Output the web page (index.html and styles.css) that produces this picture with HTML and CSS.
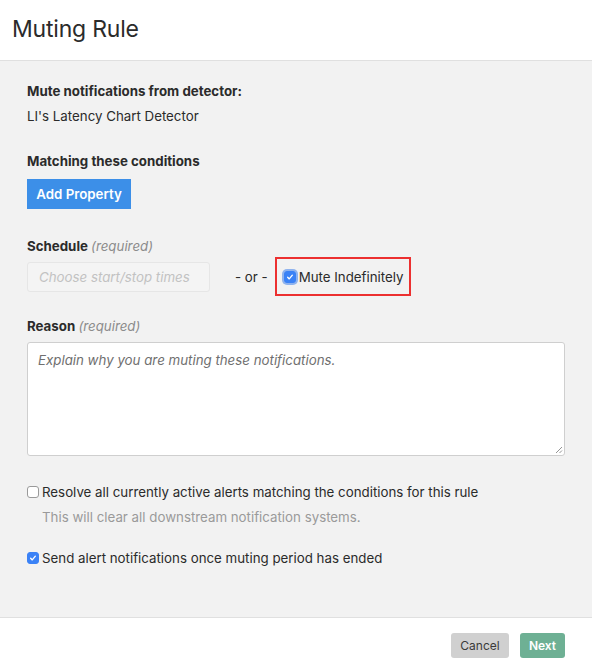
FILE: index.html
```html
<!DOCTYPE html>
<html>
<head>
<meta charset="utf-8">
<link rel="stylesheet" href="styles.css">
</head>
<body>
<div class="modal">
  <div class="header"><h1 class="title">Muting Rule</h1></div>
  <div class="body">
    <div class="label">Mute notifications from detector:</div>
    <div class="value">LI's Latency Chart Detector</div>

    <div class="label mt-section">Matching these conditions</div>
    <button class="btn-primary">Add Property</button>

    <div class="label mt-schedule">Schedule <span class="req">(required)</span></div>
    <div class="schedule-row">
      <div class="date-input">Choose start/stop times</div>
      <span class="or">- or -</span>
      <div class="highlight">
        <span class="cb checked focus"><svg viewBox="0 0 12 12" width="12" height="12"><path d="M3.2 6.3 L5.1 8.3 L8.8 3.8" fill="none" stroke="#fff" stroke-width="1.6" stroke-linecap="round" stroke-linejoin="round"/></svg></span>
        <span class="cb-text">Mute Indefinitely</span>
      </div>
    </div>

    <div class="label mt-reason">Reason <span class="req">(required)</span></div>
    <div class="textarea">
      <span class="ta-placeholder">Explain why you are muting these notifications.</span>
      <svg class="grip" viewBox="0 0 8 8" width="8" height="8"><path d="M7 1 L1 7 M7 4.5 L4.5 7" stroke="#888" stroke-width="0.9"/></svg>
    </div>

    <div class="check-row mt-resolve">
      <span class="cb"></span>
      <span class="cb-text">Resolve all currently active alerts matching the conditions for this rule</span>
    </div>
    <div class="help">This will clear all downstream notification systems.</div>

    <div class="check-row mt-send">
      <span class="cb checked"><svg viewBox="0 0 12 12" width="12" height="12"><path d="M3.2 6.3 L5.1 8.3 L8.8 3.8" fill="none" stroke="#fff" stroke-width="1.6" stroke-linecap="round" stroke-linejoin="round"/></svg></span>
      <span class="cb-text">Send alert notifications once muting period has ended</span>
    </div>
  </div>
  <div class="footer">
    <button class="btn btn-cancel">Cancel</button>
    <button class="btn btn-next">Next</button>
  </div>
</div>
</body>
</html>
```

FILE: styles.css
```css
* { box-sizing: border-box; }
html, body { margin: 0; padding: 0; }
body {
  font-family: "Inter", "Noto Sans", sans-serif;
  color: #2b2b2b;
  background: #fff;
  width: 592px;
  height: 670px;
  overflow: hidden;
}
.modal { display: flex; flex-direction: column; height: 670px; }
.header {
  flex: none;
  height: 61px;
  border-bottom: 1px solid #e0e0e0;
  padding: 15px 12px 0;
  background: #fff;
}
.title {
  margin: 0;
  font-size: 23px;
  line-height: 28px;
  font-weight: 400;
  color: #2b2b2b;
  letter-spacing: -0.2px;
}
.body {
  flex: 1;
  background: #f2f2f2;
  padding: 21px 27px 0;
  border-bottom: 1px solid #e0e0e0;
  font-size: 13.3px;
}
.label {
  font-weight: 700;
  font-size: 13.3px;
  line-height: 18px;
  color: #2b2b2b;
}
.value { margin-top: 7px; line-height: 18px; font-size: 13.3px; }
.mt-section { margin-top: 27px; }
.btn-primary {
  display: block;
  margin-top: 9px;
  height: 30px;
  width: 104px;
  border: 0;
  background: #3c8fe8;
  color: #fff;
  font-family: inherit;
  font-size: 13.3px;
  font-weight: 600;
  padding: 0;
}
.mt-schedule { margin-top: 28px; }
.req { font-style: italic; font-weight: 400; color: #8c8c8c; }
.schedule-row {
  display: flex;
  align-items: center;
  margin-top: 2px;
}
.date-input {
  width: 183px;
  height: 30px;
  border: 1px solid #e6e6e6;
  border-radius: 3px;
  background: #f4f4f4;
  color: #c2c2c2;
  font-style: italic;
  font-size: 13.3px;
  line-height: 28px;
  padding-left: 11px;
}
.or { margin-left: 25px; font-size: 13.3px; color: #2b2b2b; }
.highlight {
  margin-left: 7px;
  width: 136px;
  height: 39px;
  border: 2px solid #ec3030;
  display: flex;
  align-items: center;
  padding-left: 7px;
}
.cb {
  width: 12px;
  height: 12px;
  border: 1px solid #9a9a9a;
  border-radius: 3px;
  background: #fff;
  display: inline-flex;
  align-items: center;
  justify-content: center;
  flex: none;
}
.cb.checked { background: #3b82f6; border-color: #3b82f6; }
.cb.focus { box-shadow: 0 0 0 2px #8fb3ee; }
.cb svg { display: block; }
.cb-text { margin-left: 3px; font-size: 13.3px; line-height: 18px; color: #2b2b2b; white-space: nowrap; }
.mt-reason { margin-top: 21px; }
.textarea {
  position: relative;
  margin-top: 7px;
  height: 114px;
  background: #fff;
  border: 1px solid #cfcfcf;
  border-radius: 3px;
  padding: 9px 10px;
}
.ta-placeholder { font-style: italic; color: #6f6f6f; font-size: 13.3px; }
.grip { position: absolute; right: 1px; bottom: 1px; }
.check-row { display: flex; align-items: center; }
.mt-resolve { margin-top: 27px; }
.help { margin-top: 7px; margin-left: 15px; color: #9a9a9a; font-size: 13.3px; line-height: 18px; }
.mt-send { margin-top: 23px; }
.footer {
  flex: none;
  height: 52px;
  background: #fff;
  display: flex;
  justify-content: flex-end;
  align-items: flex-start;
  padding: 15px 27px 0 0;
  gap: 11px;
}
.btn {
  height: 25px;
  border: 0;
  border-radius: 3px;
  font-family: inherit;
  font-size: 12px;
  padding: 0;
}
.btn-cancel { width: 58px; background: #d0d0d0; color: #3a3a3a; }
.btn-next { width: 45px; background: #6eb094; color: #fff; font-weight: 600; }
```
